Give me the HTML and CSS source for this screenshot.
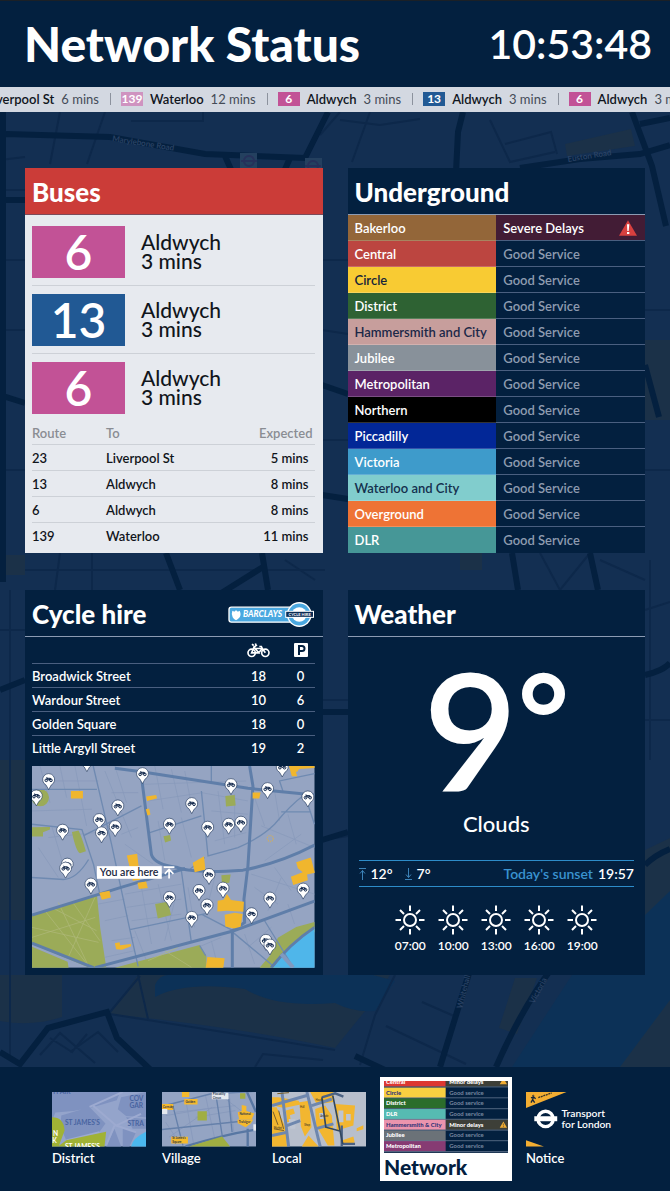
FILE: index.html
```html
<!DOCTYPE html>
<html lang="en">
<head>
<meta charset="utf-8">
<meta name="viewport" content="width=device-width, initial-scale=1">
<title>Network Status</title>
<link rel="stylesheet" href="styles.css">
</head>
<body>
<svg class="backdrop" viewBox="0 0 670 1191" preserveAspectRatio="xMidYMid slice" aria-hidden="true">
  <rect width="670" height="1191" fill="#132f52"/>
  <g fill="#1b3148">
    <path d="M565 144l66-15 4 17-68 10z"/>
    <path d="M0 975h62v42q-30 10-62 4zM138 975h252l-20 30-35 43q-90-20-225-34z"/>
    <path d="M0 555h25v20H0zM645 340h25v80h-25zM0 760h25v160H0zM460 550h22v20h-22zM645 850l25-12v90h-25zM620 1060l30-60 20-5v72h-50zM515 978h22l-20 56-18-6z"/>
  </g>
  <g fill="#0c3157">
    <path d="M155 985q5-12 18-10h200l22 6-20 30q-20 2-40-8-60 5-90-14-60-8-90 8z"/>
    <path d="M572 975h73v-60l25-24v109l-50 67H512z"/>
  </g>
  <g fill="none" stroke="#0d284a" stroke-width="2">
    <path d="M60 112l-10 52M105 112l-18 52M0 160l25-3M203 112v9h-72M320 135l20-23M370 112l-18 50M490 120l20 42 45-10M505 144l46-12 6 22M340 120l40 5 40-6M0 190h25M0 260h25M0 330h25M0 470h25M0 630h25M25 570h300M60 553l-5 37M92 553v37M285 560l30 20M540 553l20 37 30-37M600 560l45 20M645 310h25M645 470h25M645 610l25-8M322 260h26M322 330l26 4M322 440h26M322 700h26M322 840l26-4M110 1012l30-36M138 975l10 44M40 1055l20-22 35 30M50 1038l22 14 15-18M70 1052l28-20 20 20M110 1014l225 36M255 1067l8-13 60 6M395 975l-20 40-15 50M422 1002l32 14M386 1026l80 38M645 720h25M650 560v200M10 590v470"/>
  </g>
  <g fill="none" stroke="#04203f" stroke-width="6">
    <path d="M3 112v470M6 134l104 3 95 17 100 4 23-46M225 156l8 18M290 158l-8 18M463 112l-5 20-2 40M520 168l60-9 60-5 30-9M632 112l20 54 14 60M640 124l30-6M0 200h25M0 395l25 8M322 385l26 9M322 495l26 4M166 553l14 37M262 553l6 37M215 597l48-30M512 553l6 37M590 553l8 37M645 365l14 52M0 690l25-10M322 712h26M322 840l26-8M645 675q18-4 25-12M645 865q10-10 25-16M0 1052l20 12 28-36 59-16 10 26 38 36M355 1056l32 15M470 970l-30 97M552 968q-30 40-56 99"/>
  </g>
  <g fill="#2c4466" font-size="8">
    <text x="112" y="141" transform="rotate(9 112 141)">Marylebone Road</text>
    <text x="568" y="162" transform="rotate(-9 568 162)">Euston Road</text>
    <text x="462" y="1009" transform="rotate(-76 462 1009)">Whitehall</text>
    <text x="534" y="1004" transform="rotate(-62 534 1004)">Victoria</text>
  </g>
  <g fill="#24405f"><path d="M240 153h17v15h-17zM305 158h17v15h-17z"/></g>
  <g fill="none" stroke="#26305a" stroke-width="2"><circle cx="249" cy="161" r="5"/><circle cx="313" cy="166" r="5"/><path d="M241 161h16M305 166h16"/></g>
</svg>

<div class="board">
  <header class="masthead">
    <h1>Network Status</h1>
    <time class="clock" datetime="10:53:48">10:53:48</time>
  </header>

  <div class="ticker">
    <ul class="ticker-track">
      <li><span class="name">Liverpool St</span><span>6 mins</span></li>
      <li><b class="chip fading">139</b><span class="name">Waterloo</span><span>12 mins</span></li>
      <li><b class="chip">6</b><span class="name">Aldwych</span><span>3 mins</span></li>
      <li><b class="chip blue">13</b><span class="name">Aldwych</span><span>3 mins</span></li>
      <li><b class="chip">6</b><span class="name">Aldwych</span><span>3 mins</span></li>
    </ul>
  </div>

  <main class="cards">
    <section class="card buses">
      <h2>Buses</h2>
      <ul class="next-buses">
        <li><b class="route">6</b><p>Aldwych<br>3 mins</p></li>
        <li><b class="route blue">13</b><p>Aldwych<br>3 mins</p></li>
        <li><b class="route">6</b><p>Aldwych<br>3 mins</p></li>
      </ul>
      <table class="departures">
        <thead><tr><th class="route-col">Route</th><th>To</th><th class="due">Expected</th></tr></thead>
        <tbody>
          <tr><td>23</td><td>Liverpool St</td><td class="due">5 mins</td></tr>
          <tr><td>13</td><td>Aldwych</td><td class="due">8 mins</td></tr>
          <tr><td>6</td><td>Aldwych</td><td class="due">8 mins</td></tr>
          <tr><td>139</td><td>Waterloo</td><td class="due">11 mins</td></tr>
        </tbody>
      </table>
    </section>

    <section class="card">
      <h2>Underground</h2>
      <table class="lines">
        <tbody>
          <tr class="severe"><th class="bakerloo">Bakerloo</th><td><div class="alert">Severe Delays
            <svg width="18" height="16" viewBox="0 0 54 48" role="img" aria-label="Warning"><path d="M27 1l27 46H0z" fill="#d8403f"/><path d="M24 13h7l-2 20h-4zM24 36h7v6h-7z" fill="#fff"/></svg></div></td></tr>
          <tr><th class="central">Central</th><td>Good Service</td></tr>
          <tr><th class="circle">Circle</th><td>Good Service</td></tr>
          <tr><th class="district">District</th><td>Good Service</td></tr>
          <tr><th class="hammersmith">Hammersmith and City</th><td>Good Service</td></tr>
          <tr><th class="jubilee">Jubilee</th><td>Good Service</td></tr>
          <tr><th class="metropolitan">Metropolitan</th><td>Good Service</td></tr>
          <tr><th class="northern">Northern</th><td>Good Service</td></tr>
          <tr><th class="piccadilly">Piccadilly</th><td>Good Service</td></tr>
          <tr><th class="victoria">Victoria</th><td>Good Service</td></tr>
          <tr><th class="waterloo">Waterloo and City</th><td>Good Service</td></tr>
          <tr><th class="overground">Overground</th><td>Good Service</td></tr>
          <tr><th class="dlr">DLR</th><td>Good Service</td></tr>
        </tbody>
      </table>
    </section>

    <section class="card cycle">
      <h2>Cycle hire
        <svg width="87" height="27" viewBox="24 18 260 80" role="img" aria-label="Barclays Cycle Hire">
          <rect x="27" y="36" width="190" height="45" rx="7" fill="#4aa8e0" stroke="#fff" stroke-width="4"/>
          <path d="M37 47q5 3 8 1 3-6 6 0 4 3 8-1 5 12 0 19-5 6-11 9-7-3-10-9-5-8-1-19z" fill="#fff"/>
          <text x="69" y="67" font-size="25" font-style="italic" font-weight="900" fill="#fff">BARCLAYS</text>
          <circle cx="237" cy="58" r="37" fill="#fff"/><circle cx="237" cy="58" r="33" fill="#4aa8e0"/><circle cx="237" cy="58" r="22" fill="#fff"/>
          <rect x="195" y="47" width="86" height="21" fill="#fff"/><rect x="198" y="50" width="80" height="15" fill="#0b2c54"/>
          <text x="238" y="62" text-anchor="middle" font-size="12" font-weight="700" fill="#fff">CYCLE HIRE</text>
        </svg>
      </h2>
      <div class="card-body">
        <table class="docks">
          <thead><tr><th></th>
            <th class="bikes"><svg width="23" height="15" viewBox="692 42 69 44" role="img" aria-label="Bikes" fill="none" stroke="#fff" stroke-width="5"><circle cx="706" cy="71" r="11"/><circle cx="747" cy="71" r="11"/><path d="M706 71l7-17 14 17zM713 54l9-7M727 71l11-13 9 13M716 58h22M738 58l-3-6h-6M712 49l-5-4M719 47l-2-4"/></svg></th>
            <th class="spaces"><svg width="14" height="14" viewBox="0 0 14 14" role="img" aria-label="Parking spaces"><rect width="14" height="14" rx="1" fill="#fff"/><path d="M5 12V3h3a2 2 0 010 5H5" fill="none" stroke="#03203f" stroke-width="2"/></svg></th></tr></thead>
          <tbody>
            <tr><td>Broadwick Street</td><td class="num">18</td><td class="num">0</td></tr>
            <tr><td>Wardour Street</td><td class="num">10</td><td class="num">6</td></tr>
            <tr><td>Golden Square</td><td class="num">18</td><td class="num">0</td></tr>
            <tr><td>Little Argyll Street</td><td class="num">19</td><td class="num">2</td></tr>
          </tbody>
        </table>
        <svg class="map" viewBox="51 15 849 606" role="img" aria-label="Map of nearby cycle hire stations">
          <defs>
            <g id="pin"><path d="M0 30L-8 16A18 18 0 1 1 8 16z" fill="#fff" stroke="#23395d" stroke-width="2"/><g fill="none" stroke="#10264a" stroke-width="3"><circle cx="-7" cy="2" r="4"/><circle cx="7" cy="2" r="4"/><path d="M-7 2l3-6 5 6 4-6 2 6M-4-4h9M-7-6l4 1"/></g></g>
          </defs>
          <rect x="51" y="15" width="849" height="606" fill="#95a4c2"/>
          <g fill="none" stroke="#8798b9" stroke-width="2">
            <path d="M75 15l30 110M135 15l20 95M180 15l35 180M120 60h130M51 150l180-5M100 230l170-18M70 260l60 90M110 195l45 150M270 30l80 200M290 95h80M300 15l35 110M320 220l50-20M330 250l85 60M385 70l310-10M400 120l165-25M420 15l25 130M470 25l30 130M510 30l20 100M430 180l20 120M500 170l30 120M560 95l140 25M610 90l20 160M660 100v130M590 150l110 10M600 240l95-25M720 110l30 85M780 90l15 90M740 195l160 65M820 160l25 90M750 300l110-80M780 320l50 70M710 340l190 60M720 380l70 50M800 350l-40 100M250 430l80-15M270 480l70-15M290 540l70-10M330 400l170-30M335 440l165-25M350 480l150-20M380 380l30 170M430 370l40 170M450 540l30-120M520 380l20 120M600 350l-30 120M480 590l140-60M590 540l20 80M690 520l30 90M700 560l70-60M820 430l20 60M270 590l90-20M360 510l35 90"/>
          </g>
          <g fill="#9bab58">
            <path d="M51 462l195-60 10 100 18 118H220L51 550zM51 558l107 45 3 18H51zM300 621l255-68 20 33v35zM735 621l30-35 25-55 55-32 55-15v30l-70 80-35 27zM171 213l20-4q10 20 22 62l-18 6q-12-6-24-64zM51 199l54-1v8l-21 8v13H51zM632 105l28-3 3 32-29 3zM421 430l38-7 10 40-40 10zM620 343l28-2-4 25-22 2zM446 226l20-4 3 17-18 6z"/>
            <circle cx="76" cy="110" r="26"/>
          </g>
          <g fill="none" stroke="#b0b97c" stroke-width="2"><path d="M90 450l130 165M110 440l135 70M51 500l200 45M130 425l90 190M240 410l-80 180M51 530l190-60M170 420l85 120M400 600l90-40M450 570l80 50"/></g>
          <path d="M900 500v121H775l60-75z" fill="#4fb6ea"/>
          <g fill="none" stroke="#6f8ab1" stroke-width="4">
            <path d="M51 85h195M235 15l55 235 55 257 25 110M51 190l150 16 35 105 20 95M205 225l175-90M51 350l95 6q40-2 75-60M590 15v48M560 90l20 195 90-25q70-30 110-70 50-60 85-85M405 215l155-50M800 153h90M870 100l30 90M805 90l-10-30 105-22M500 330l30 215M345 507l235-50M560 460l95 50M750 480l80 130M655 515l120 100M555 555l18 30M520 330l50-40"/>
          </g>
          <g fill="none" stroke="#5f7ea9" stroke-width="9">
            <path d="M300 22l80 10 320 50 200 20"/><path d="M378 32l32 250q10 30 75 37 50 20 200 9 110-20 215-75"/><path d="M705 15l10 60-15 240-12 100 2 70-37 25v111"/><path d="M51 463l270-84 190-56"/><path d="M51 547l185 74M240 621l415-110 245-90"/>
            <path d="M900 500q-75 50-130 121"/>
          </g>
          <path d="M800 580l36 41" stroke="#8199bf" stroke-width="12"/>
          <g fill="#f0b62e">
            <path d="M168 90h36v23h-36zM394 107l30-5 3 10-30 8zM393 145l10-2 4 18-9 3zM714 95h24l-4 18h-20zM823 15h77v6l-46 3-6 8h-4l4 14h-16zM336 284l31-5 9 78-22 3zM368 366l26-4 5 20-27 3zM253 396l31-6 4 20-27 7zM534 306l34-20 4 40-32 8zM609 420l18-3 10-17 12 18 39 5-2 30-50-3-28 2zM630 462l30-6 24 4-6 38-20 5-26-6zM845 304l44-14 12 46-27 6-24-20zM829 348l47-18 4 28-44 15zM300 548l14-3 2 9 32-4 1 7-28 10-17-1zM578 589l52 4-4 28h-53z"/>
          </g>
          <circle cx="767" cy="233" r="9" fill="none" stroke="#d0ae60" stroke-width="4" stroke-dasharray="3 3"/>
          <use href="#pin" x="216" y="2"/><use href="#pin" x="101" y="56"/><use href="#pin" x="383" y="38"/><use href="#pin" x="64" y="105"/><use href="#pin" x="309" y="135"/><use href="#pin" x="253" y="176"/><use href="#pin" x="301" y="197"/><use href="#pin" x="260" y="216"/><use href="#pin" x="143" y="208"/><use href="#pin" x="157" y="310"/><use href="#pin" x="152" y="322"/><use href="#pin" x="228" y="370"/><use href="#pin" x="531" y="128"/><use href="#pin" x="649" y="71"/><use href="#pin" x="759" y="83"/><use href="#pin" x="880" y="108"/><use href="#pin" x="803" y="18"/><use href="#pin" x="464" y="190"/><use href="#pin" x="579" y="199"/><use href="#pin" x="642" y="190"/><use href="#pin" x="679" y="184"/><use href="#pin" x="583" y="341"/><use href="#pin" x="464" y="410"/><use href="#pin" x="553" y="389"/><use href="#pin" x="625" y="382"/><use href="#pin" x="577" y="433"/><use href="#pin" x="531" y="470"/><use href="#pin" x="711" y="459"/><use href="#pin" x="766" y="412"/><use href="#pin" x="866" y="385"/><use href="#pin" x="754" y="539"/><use href="#pin" x="766" y="553"/>
          <rect x="246" y="316" width="195" height="38" fill="#fff"/>
          <text x="343" y="346" text-anchor="middle" font-size="32" font-weight="600" fill="#1a2740">You are here</text>
          <path d="M447 319h32M463 353v-26M450 339l13-13 13 13" fill="none" stroke="#fff" stroke-width="5"/>
        </svg>
      </div>
    </section>

    <section class="card weather">
      <h2>Weather</h2>
      <p class="temperature">9<span class="degree">°</span></p>
      <p class="summary">Clouds</p>
      <dl class="outlook">
        <div><dt><svg width="7" height="12" viewBox="0 0 14 24" role="img" aria-label="High"><path d="M0 1h14M7 24V5M2 11l5-6 5 6" fill="none" stroke="#3c83b8" stroke-width="2"/></svg></dt><dd>12°</dd></div>
        <div><dt><svg width="7" height="12" viewBox="0 0 14 24" role="img" aria-label="Low"><path d="M0 23h14M7 0v19M2 13l5 6 5-6" fill="none" stroke="#3c83b8" stroke-width="2"/></svg></dt><dd>7°</dd></div>
        <div class="sunset"><dt>Today's sunset</dt><dd>19:57</dd></div>
      </dl>
      <svg class="defs" aria-hidden="true"><symbol id="sun" viewBox="0 0 60 60"><g fill="none" stroke="#fff" stroke-width="4"><circle cx="30" cy="30" r="12"/><path d="M30 1v11M30 48v11M1 30h11M48 30h11M10 10l8 8M42 42l8 8M50 10l-8 8M18 42l-8 8"/></g></symbol></svg>
      <ul class="hours">
        <li><svg role="img" aria-label="Sunny"><use href="#sun"/></svg>07:00</li>
        <li><svg role="img" aria-label="Sunny"><use href="#sun"/></svg>10:00</li>
        <li><svg role="img" aria-label="Sunny"><use href="#sun"/></svg>13:00</li>
        <li><svg role="img" aria-label="Sunny"><use href="#sun"/></svg>16:00</li>
        <li><svg role="img" aria-label="Sunny"><use href="#sun"/></svg>19:00</li>
      </ul>
    </section>
  </main>

  <nav class="views" aria-label="Views">
    <a href="#district">
      <svg viewBox="157 369 283 164" aria-hidden="true">
        <rect x="157" y="369" width="283" height="164" fill="#94a4cb"/>
        <g fill="#7f92c0"><path d="M157 369h205l-10 25-70 20-60 12-55 5-10 25zM185 440l85-26 48 50-20 28-98 22-18-40zM365 385l75-16v76l-60-4-25-20zM345 480l20 53h-45zM370 475l40 15-20 43h-20zM380 445l60 5v30h-40z"/></g>
        <path d="M270 414l100-45M280 410l70 60 75-35M345 470l-25 60M350 470l60 20M200 515l100-25" fill="none" stroke="#9daad0" stroke-width="6"/>
        <path d="M157 445q35 0 38 40l-18 48h-20zM175 533l25-19 120-25-5 44z" fill="#a0b235"/>
        <path d="M395 533q5-25 45-44v44z" fill="#4bb8ef"/>
        <g font-size="20" font-weight="700" fill="#4864a1"><text x="157" y="376">YFAIR</text><text x="390" y="396">COV</text><text x="390" y="416">GAR</text><text x="196" y="468">ST JAMES'S</text><text x="384" y="470">STRA</text></g>
        <g font-size="20" font-weight="700" fill="#fff"><text x="160" y="503">N</text><text x="158" y="523">K</text><text x="196" y="541">ST JAMES'S</text></g>
      </svg>District</a>
    <a href="#village">
      <svg viewBox="489 369 283 164" aria-hidden="true">
        <rect x="489" y="369" width="283" height="164" fill="#94a4c3"/>
        <path d="M500 440l150-25M510 505l130-90M560 390l25 140M620 380l30 140M690 369l15 120M590 445l120-20M500 460l40 60M530 430l180-20M680 390l80 60" stroke="#8396b9" stroke-width="2" fill="none"/>
        <path d="M489 412l145-37 138-8M520 403l32 127M489 482l240-25M650 369l20 130M690 390l10 100" stroke="#6580aa" stroke-width="4" fill="none"/>
        <path d="M560 533q110-35 211-51M745 369l27 60M747 480v53" stroke="#5877a3" stroke-width="7" fill="none"/>
        <path d="M570 533l100-30 24 30zM596 427h28v28h-28zM724 373h16v16h-16z" fill="#a0ae42"/>
        <path d="M489 405h34v18h-34zM549 369h22v15h-22zM556 390h40v17h-40zM717 430l12-4v-18l14 3v15l24 8-8 17h-38zM716 452h48l-8 12-15 11-24-12zM517 504h50v20h-50z" fill="#f5b92c"/>
        <path d="M639 371h50v20h-50zM489 420h16v15h-16zM764 466h8v20h-8z" fill="#e5e9ef"/>
        <g font-size="9" font-weight="700" fill="#27324b"><text x="491" y="416">Carnaby</text><text x="560" y="401">Golden</text><text x="642" y="379">Piccadilly</text><text x="642" y="389">Circus</text><text x="722" y="438">National</text><text x="720" y="461">Trafalgar</text><text x="520" y="512">St James's</text><text x="520" y="522">Square</text></g>
      </svg>Village</a>
    <a href="#local">
      <svg viewBox="820 369 283 164" aria-hidden="true">
        <rect x="820" y="369" width="283" height="164" fill="#b8bfcc"/>
        <g fill="#f2b630"><path d="M820 385h20l60 10 6 12-50 10-36-8zM820 415h14l28 65 3 53h-45zM862 425l22-6 5 15-15 5 3 20h-12zM903 400l28-5 8 80-20 28-12-30zM935 369h70v30l-50 8zM950 420l30-10 20 30 8 90h-20l-35-60zM1010 405l60 5-5 60-50 15zM1030 515l35-12 4 18-35 8zM1075 478l20-9v12l-20 6zM930 500l30 33h-50z"/></g>
        <g fill="#bec5d2"><path d="M870 450h20v30h-15zM962 432h14v18h-12zM1020 425h15v35h-15zM1043 435h14v20h-14z"/></g>
        <path d="M820 410l110-32M850 369l20 164M925 369l40 164M820 500l45-10M865 470l40-15M940 410l60-20M950 480l55-15" fill="none" stroke="#6e87ae" stroke-width="9"/>
        <path d="M970 385l40-12 25 10M1030 470v63M1030 525h40" fill="none" stroke="#4b6283" stroke-width="7"/>
        <path d="M1003 380l30 145M970 385l12 90 45 12" fill="none" stroke="#32475f" stroke-width="5"/>
        <path d="M836 374l35-3M823 428l15 40M840 425l15 55M826 480l30 5" stroke="#775d28" stroke-width="3"/>
        <g font-size="8" fill="#493b26"><text x="825" y="480">Market</text><text x="904" y="418">Hall</text><text x="917" y="470">Shop</text><text x="951" y="395">House</text><text x="965" y="445">Arcade</text></g>
      </svg>Local</a>
    <a href="#network" class="active" aria-current="page">
      <svg viewBox="146 332 376 218" aria-hidden="true">
        <rect x="146" y="332" width="376" height="218" fill="#03203f"/>
        <path d="M333 332h189v17H333zM333 449h189v31H333z" fill="#3d3f38"/>
        <path d="M146 332h187v17H146z" fill="#dc3832"/><path d="M146 352h187v31H146z" fill="#f8d041"/><path d="M146 384h187v31H146z" fill="#2b6d2b"/><path d="M146 417h187v31H146z" fill="#56bbb2"/><path d="M146 449h187v31H146z" fill="#eb94ad"/><path d="M146 482h187v31H146z" fill="#6b7278"/><path d="M146 514h187v31H146z" fill="#863b73"/>
        <path d="M146 350h376M146 383h376M146 416h376M146 448h376M146 481h376M146 513h376M146 546h376" stroke="#7889a2" stroke-width="2"/>
        <g font-size="18" font-weight="900" fill="#fff"><text x="152" y="342">Central</text><text x="152" y="406">District</text><text x="152" y="438">DLR</text><text x="152" y="503">Jubilee</text><text x="152" y="535">Metropolitan</text><text x="344" y="342">Minor delays</text><text x="344" y="471">Minor delays</text></g>
        <g font-size="18" font-weight="900" fill="#353478"><text x="152" y="374">Circle</text><text x="152" y="471">Hammersmith &amp; City</text></g>
        <g font-size="18" font-weight="700" fill="#7888a0"><text x="344" y="374">Good service</text><text x="344" y="406">Good service</text><text x="344" y="438">Good service</text><text x="344" y="503">Good service</text><text x="344" y="535">Good service</text></g>
        <path d="M508 323l11 19h-22zM508 455l11 19h-22z" fill="#f4ae32"/><path d="M508 461v6M508 469v3" stroke="#3d3f38" stroke-width="2"/>
      </svg>Network</a>
    <a href="#notice">
      <svg viewBox="573 369 283 164" aria-hidden="true">
        <path d="M573 369h122l-122 48zM573 514l54 19h-54z" fill="#f4ae32"/>
        <g fill="none" stroke="#17263b" stroke-width="4"><circle cx="595" cy="380" r="1"/><path d="M596 383l-3 9 6 9M593 392l-5 9M588 387l8-3 6 5"/></g>
        <path d="M610 386l40-14" stroke="#3a3425" stroke-width="4" stroke-dasharray="6 2"/>
        <circle cx="632" cy="450" r="23" fill="none" stroke="#fff" stroke-width="10"/><path d="M598 442h69v15h-69z" fill="#fff"/>
        <g font-size="31" font-weight="600" fill="#fff"><text x="680" y="443">Transport</text><text x="680" y="477">for London</text></g>
      </svg>Notice</a>
  </nav>
</div>
</body>
</html>
```
FILE: styles.css
```css
:root {
  --navy: #03203f;
  --rule: #8c9bb3;
  --faint-rule: #4a5f80;
  --pink: #c25296;
  --blue: #215994;
}

* { box-sizing: border-box; }

body {
  margin: 0;
  background: #132f52;
  color: #fff;
  font-family: Lato, "Open Sans", sans-serif;
  font-size: 13px;
  font-weight: 600;
  line-height: 16px;
}

h1, h2, p, ul, dl, dd { margin: 0; padding: 0; }
ul { list-style: none; }
table { width: 100%; border-collapse: separate; border-spacing: 0; }
th { font-weight: inherit; text-align: left; }
th, td { padding: 0; }

.backdrop {
  position: absolute;
  inset: 0;
  width: 100%;
  height: 100%;
  z-index: -1;
}

.board {
  display: flex;
  flex-direction: column;
  min-height: 100vh;
}

.masthead {
  display: flex;
  align-items: center;
  justify-content: space-between;
  padding: 15px 18px 15px 24px;
  border-top: 1px solid #1b2026;
  background: var(--navy);
}
.masthead h1 { font-size: 48px; font-weight: 900; line-height: 56px; }
.clock { font-size: 41px; font-weight: 600; line-height: 56px; }

.ticker {
  overflow: hidden;
  background: #d3d8e1;
  color: #444b57;
  font-weight: 400;
}
.ticker-track { display: flex; margin-left: -14px; }
.ticker-track li {
  display: flex;
  flex: none;
  align-items: center;
  gap: 7px;
  padding: 4px 0 5px;
  white-space: nowrap;
}
.ticker-track li::after {
  content: "";
  width: 1px;
  height: 12px;
  margin: 0 10px 0 4px;
  background: #8c929d;
}
.ticker .name { color: #10151d; font-weight: 600; }
.chip {
  width: 22px;
  background: var(--pink);
  color: #fff;
  font-size: 12px;
  line-height: 14px;
  text-align: center;
}
.chip.fading { background: #cf93c0; }
.chip.blue, .route.blue { background: var(--blue); }

.cards {
  display: grid;
  flex: 1;
  grid-template-columns: 1fr 1fr;
  align-content: start;
  gap: 37px 25px;
  padding: 56px 25px 36px;
}
.card { display: flex; flex-direction: column; background: var(--navy); }
.card h2 {
  display: flex;
  align-items: center;
  justify-content: space-between;
  height: 47px;
  padding: 2px 8px 0 7px;
  border-bottom: 1px solid var(--rule);
  font-size: 26px;
  font-weight: 900;
  line-height: 30px;
}

.buses { background: #e7eaef; color: #11151b; }
.buses h2 { border-color: #7c4a59; background: #cb3c38; color: #fff; }
.next-buses { padding: 3px 8px 0 7px; }
.next-buses li {
  display: flex;
  align-items: center;
  gap: 16px;
  padding: 8px 0 7px;
  border-bottom: 1px solid #cdd1d7;
}
.next-buses li:last-child { border: 0; }
.route {
  width: 93px;
  background: var(--pink);
  color: #fff;
  font-size: 48px;
  font-weight: 600;
  line-height: 52px;
  text-align: center;
}
.next-buses p { padding-bottom: 2px; font-size: 21px; font-weight: 500; line-height: 19px; }
.departures { width: auto; margin: 0 8px 0 7px; }
.departures th, .departures td { height: 26px; border-bottom: 1px solid #cdd1d7; }
.departures th { height: 24px; color: #8a8d93; }
.departures tr:last-child td { border: 0; }
.departures .route-col { width: 74px; }
.departures td.due { padding-right: 6px; text-align: right; }
.departures th.due { padding-right: 2px; text-align: right; }

.lines { table-layout: fixed; }
.lines th, .lines td { height: 26px; padding-left: 7px; border-bottom: 1px solid var(--faint-rule); }
.lines th { border-bottom-color: rgb(255 255 255 / 20%); }
.lines td { color: #8e9bb0; }
.lines tr:last-child > * { border-bottom: 0; }
.lines .severe td { background: #421c35; color: #fff; }
.alert { display: flex; align-items: center; justify-content: space-between; padding-right: 8px; }
.bakerloo { background: #936639; }
.central { background: #bc4540; }
.circle { background: #f8cb33; color: #16243a; }
.district { background: #2e6233; }
.hammersmith { background: #c79e9c; color: #1c2848; }
.jubilee { background: #88919a; }
.metropolitan { background: #5b2366; }
.northern { background: #000; }
.piccadilly { background: #022797; }
.victoria { background: #3e9bcb; }
.waterloo { background: #81cdcd; color: #14304d; }
.overground { background: #ee7335; }
.dlr { background: #469797; }

.card-body { display: flex; flex-direction: column; gap: 6px; padding: 0 8px 7px 7px; }
.docks th, .docks td { height: 24px; border-bottom: 1px solid var(--faint-rule); }
.docks th { height: 27px; text-align: center; }
.docks tr:last-child td { border: 0; }
.docks svg { display: block; margin: 0 auto; }
.docks .bikes { width: 56px; }
.docks .spaces { width: 28px; }
.docks .num { text-align: center; }
.map { display: block; width: 100%; height: auto; }

.temperature {
  padding: 20px 0 9px;
  font-size: 163px;
  font-weight: 600;
  line-height: 144px;
  text-align: center;
}
.degree { font-size: 124px; font-weight: 700; line-height: 0; vertical-align: 28px; }
.summary { font-size: 22px; font-weight: 500; line-height: 28px; text-align: center; }
.outlook {
  display: flex;
  align-items: center;
  gap: 12px;
  margin: 22px 11px 18px;
  padding: 4px 0;
  border: solid #2d8cc9;
  border-width: 1px 0;
  font-size: 14px;
  line-height: 17px;
}
.outlook div { display: flex; align-items: center; gap: 5px; }
.outlook svg { display: block; }
.outlook .sunset { margin-left: auto; }
.sunset dt { color: #3a93d0; }
.defs { position: absolute; width: 0; height: 0; }
.hours { display: flex; justify-content: center; padding-bottom: 20px; font-size: 12px; }
.hours li { display: flex; flex-direction: column; align-items: center; gap: 3px; width: 43px; }
.hours svg { width: 30px; height: 30px; }

.views {
  display: flex;
  align-items: center;
  justify-content: center;
  gap: 16px;
  padding: 10px 50px 10px 52px;
  background: var(--navy);
}
.views a {
  display: flex;
  flex-direction: column;
  gap: 3px;
  width: 94px;
  color: #fff;
  text-decoration: none;
}
.views svg { display: block; width: 100%; height: auto; }
.views .active {
  flex: none;
  gap: 2px;
  width: 132px;
  margin: 0 -2px;
  padding: 4px 4px 3px;
  background: #fff;
  color: var(--navy);
  font-size: 21px;
  font-weight: 900;
  line-height: 23px;
}
```
